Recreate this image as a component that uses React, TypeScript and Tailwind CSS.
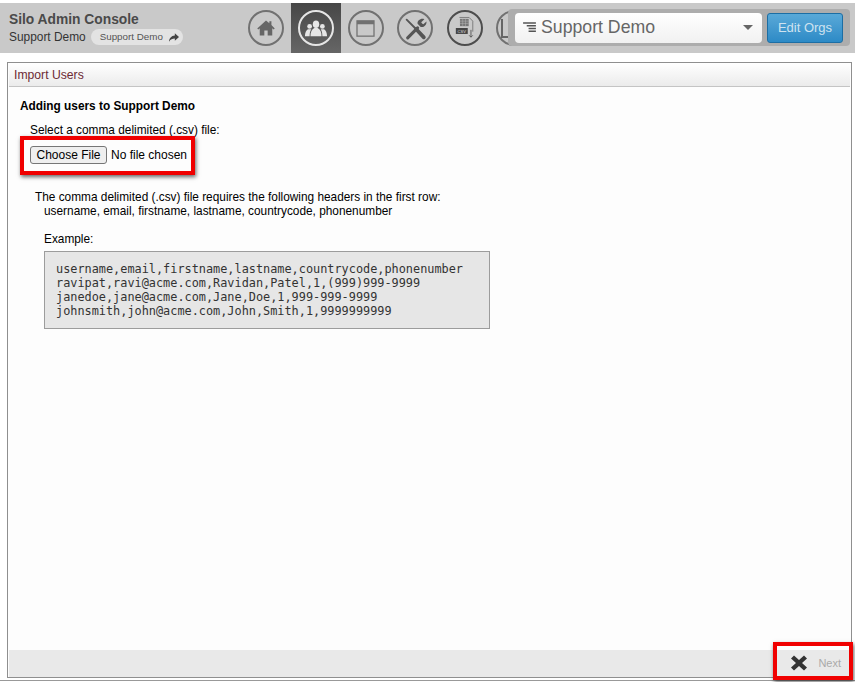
const NavCircle = ({ active, narrow, heavy, children }: { active?: boolean; narrow?: boolean; heavy?: boolean; children?: React.ReactNode }) => (
  <div
    className={
      active
        ? "flex h-[50px] w-[50px] items-center justify-center bg-gradient-to-b from-[#474747] to-[#666666]"
        : narrow
          ? "flex h-[50px] w-[49px] items-center justify-center"
          : "flex h-[50px] w-[50px] items-center justify-center"
    }
  >
    <div
      className={
        active
          ? "flex h-[36px] w-[36px] items-center justify-center rounded-full border-2 border-[#e6e6e6]"
          : heavy
            ? "flex h-[36px] w-[36px] items-center justify-center rounded-full border-2 border-[#4d4d4d]"
            : "flex h-[36px] w-[36px] items-center justify-center rounded-full border-2 border-[#717171]"
      }
    >
      {children}
    </div>
  </div>
);

const App = () => {
  return (
    <div className="relative h-[682px] w-[855px] overflow-hidden bg-white pt-[3px] font-['Liberation_Sans',Arial,sans-serif] text-xs text-black">
      <header className="relative flex h-[50px] bg-[#c9c9c9]">
        <div className="w-[241px] shrink-0 pl-[9px] pt-[9px]">
          <div className="text-[13.8px] leading-[16px] font-bold text-[#4a4a4a]">Silo Admin Console</div>
          <div className="mt-[1px] flex items-center text-[11.9px] leading-[16px] text-[#333]">
            Support Demo
            <span className="ml-[5px] flex h-[16px] w-[92px] items-center rounded-full bg-[#e3e3e3] pl-[9px] text-[9.8px] text-[#555]">
              Support Demo
              <svg viewBox="0 0 12 10" className="ml-[6px] h-[9px] w-[10px] fill-[#444]">
                <path d="M7 0l5 4.500L7 9V6.300C4 6.300 2 7.200 0 10c.4-4 2.600-7 7-7.300z" />
              </svg>
            </span>
          </div>
        </div>
        <nav className="flex">
          <NavCircle>
            <svg viewBox="0 0 24 24" className="h-[20px] w-[20px] fill-[#666]">
              <path d="M12 3L1.500 12.500l1.300 1.200L4.500 12.300V21h5.500v-6h4v6h5.500v-8.700l1.700 1.400 1.300-1.200L18.500 8.500V4h-2.500v2.200z" />
            </svg>
          </NavCircle>
          <NavCircle active>
            <svg viewBox="0 0 26 20" className="h-[17px] w-[24px] fill-[#e6e6e6]">
              <ellipse cx="13" cy="5" rx="3.800" ry="4.500" />
              <path d="M6.500 19c0-5 1.500-8 4.500-9.500h4c3 1.500 4.500 4.500 4.500 9.500z" />
              <circle cx="5.500" cy="7.500" r="2.800" />
              <path d="M0 19c0-4 1.500-7 3.500-8h4C6 13 5.500 16 5.500 19z" />
              <circle cx="20.500" cy="7.500" r="2.800" />
              <path d="M26 19c0-4-1.500-7-3.500-8h-4c1.500 2 2 5 2 8z" />
            </svg>
          </NavCircle>
          <NavCircle narrow>
            <svg viewBox="0 0 22 20" className="h-[17px] w-[19px]">
              <rect x="1" y="1" width="20" height="18" fill="none" stroke="#717171" strokeWidth="1.500" />
              <rect x="1" y="1" width="20" height="4" fill="#717171" />
            </svg>
          </NavCircle>
          <NavCircle>
            <svg viewBox="0 0 24 24" className="h-[25px] w-[25px]">
              <path d="M3.500 3.500L12 12" stroke="#555" strokeWidth="1.800" strokeLinecap="round" />
              <path d="M12.500 12.500L20 20.500" stroke="#555" strokeWidth="3.600" strokeLinecap="round" />
              <path d="M4.500 21L14 11.500" stroke="#555" strokeWidth="3" strokeLinecap="round" />
              <path d="M20.500 3l-3 3 .8 1.200 1.200.8 3-2.800c.5 3-2.200 6-5.500 5.300l-3-3C13.500 4.500 17 1.800 20.500 3z" fill="#555" />
            </svg>
          </NavCircle>
          <NavCircle narrow heavy>
            <svg viewBox="0 0 24 26" className="h-[24px] w-[22px]">
              <path d="M6 1.500h10.500l4 4V17" fill="none" stroke="#777" />
              <rect x="6.500" y="3" width="9.500" height="8" fill="#777" />
              <path d="M6.500 5.500h9.500M6.500 8h9.500M9.500 3v8M12.500 3v8" stroke="#bbb" strokeWidth="0.500" />
              <rect x="2" y="13" width="13" height="6.500" fill="#444" />
              <text x="8.500" y="18.200" fontSize="4.500" fill="#ddd" textAnchor="middle" fontFamily="Liberation Sans">CSV</text>
              <path d="M18.500 15v8m-2-2l2 2 2-2" fill="none" stroke="#555" />
            </svg>
          </NavCircle>
          <NavCircle>
            <svg viewBox="0 0 10 20" className="mr-[18px] h-[20px] w-[10px]">
              <path d="M2 1v18h6" fill="none" stroke="#666" strokeWidth="2" />
            </svg>
          </NavCircle>
        </nav>
        <div className="absolute top-[6px] left-[508px] flex h-[37px] w-[342px] items-center rounded-[4px] bg-[#adadad] pl-[7px]">
          <div className="flex h-[30px] w-[247px] items-center rounded-[4px] bg-gradient-to-b from-white to-[#f1f1f1] pl-[8px] text-[17.7px] text-[#666]">
            <svg viewBox="0 0 14 12" className="mr-[5px] h-[11px] w-[13px] stroke-[#555]">
              <path d="M0 1h14M4 4h10M6 7h8M6 10h8" strokeWidth="1.600" />
            </svg>
            Support Demo
            <span className="mr-[9px] ml-auto h-0 w-0 border-x-[5px] border-t-[5px] border-x-transparent border-t-[#666]" />
          </div>
          <button className="ml-[5px] h-[30px] w-[76px] rounded-[3px] border border-[#1c6ea4] bg-gradient-to-b from-[#59a9d8] to-[#2c8ac6] text-[13px] text-[#cfe3f0]">
            Edit Orgs
          </button>
        </div>
      </header>

      <main className="mt-[9px] mr-[3px] ml-[7px] flex h-[616px] flex-col border border-[#8f8f8f] bg-[#fdfdfd] px-[1px]">
        <div className="h-[24px] border-b border-[#c4c4c4] bg-gradient-to-b from-white to-[#ebebeb] pl-[5px] text-[12.2px] leading-[24px] text-[#6d2a35]">
          Import Users
        </div>
        <div className="flex-1 pt-[12px] pl-[11px] text-[11.85px] leading-[14px]">
          <h2 className="font-bold">Adding users to Support Demo</h2>
          <p className="mt-[10px] pl-[10px]">Select a comma delimited (.csv) file:</p>
          <div className="mt-[9px] pl-[10px]">
            <input
              type="file"
              className="block text-[12px] file:mr-[4px] file:h-[18px] file:w-[77px] file:rounded-[3px] file:border file:border-[#767676] file:bg-[#efefef] file:text-[12px] file:text-black"
            />
          </div>
          <div className="mt-[26px] pl-[15px]">
            <p>The comma delimited (.csv) file requires the following headers in the first row:</p>
            <p className="pl-[9px]">username, email, firstname, lastname, countrycode, phonenumber</p>
          </div>
          <p className="mt-[14px] pl-[24px]">Example:</p>
          <pre className="mt-[5px] ml-[24px] h-[78px] w-[446px] border border-[#9c9c9c] bg-[#e6e6e6] pt-[10px] pl-[11px] font-['DejaVu_Sans_Mono',monospace] text-[11.87px] leading-[14px] text-[#333]">
            {`username,email,firstname,lastname,countrycode,phonenumber
ravipat,ravi@acme.com,Ravidan,Patel,1,(999)999-9999
janedoe,jane@acme.com,Jane,Doe,1,999-999-9999
johnsmith,john@acme.com,John,Smith,1,9999999999`}
          </pre>
        </div>
        <footer className="flex h-[27px] items-center justify-end bg-[#e9e9e9] pr-[9px] pb-[1px]">
          <svg viewBox="0 0 16 16" className="h-[16px] w-[16px] fill-[#333]">
            <path d="M3 .5L8 5l5-4.500L16 3.500 11 8l5 4.500-3 3L8 11l-5 4.500-3-3L5 8 0 3.500z" />
          </svg>
          <span className="ml-[11px] text-[11px] text-[#aaa]">Next</span>
        </footer>
      </main>
      <div className="mt-[2px] h-[1px] bg-[#999]" />

      <div className="absolute top-[136px] left-[20px] h-[39px] w-[175px] border-[4px] border-[#f00000] shadow-[1px_2px_4px_rgba(0,0,0,0.6)]" />
      <div className="absolute top-[642px] left-[773px] h-[38px] w-[80px] border-[4px] border-[#f00000] shadow-[1px_2px_4px_rgba(0,0,0,0.6)]" />
    </div>
  );
};

export default App;
